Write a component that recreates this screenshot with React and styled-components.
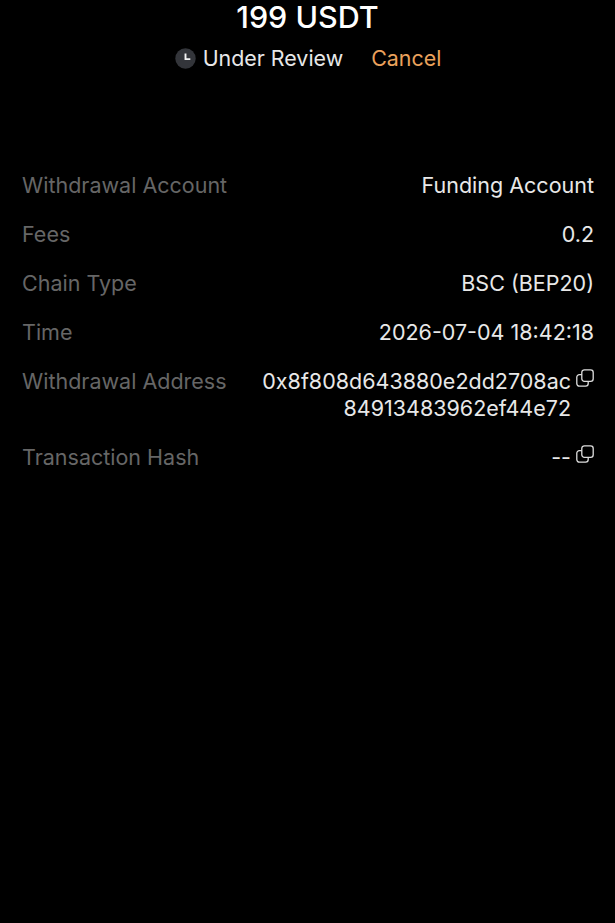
import React from "react";
import styled, { createGlobalStyle } from "styled-components";

const GlobalStyle = createGlobalStyle`
  html, body {
    margin: 0;
    background: #000;
  }
`;

const rows = [
  { label: "Withdrawal Account", value: "Funding Account" },
  { label: "Fees", value: "0.2" },
  { label: "Chain Type", value: "BSC (BEP20)" },
  { label: "Time", value: "2026-07-04 18:42:18" },
  { label: "Withdrawal Address", value: "0x8f808d643880e2dd2708ac 84913483962ef44e72", copy: true },
  { label: "Transaction Hash", value: "--", copy: true },
];

const CopyIcon = () => (
  <CopySvg viewBox="0 0 18 18" fill="none" stroke="#dedede" strokeWidth="1.3">
    <rect x="5.8" y="0.8" width="11.4" height="11.6" rx="2.6" />
    <path d="M5.8 5.6H3.4A2.6 2.6 0 0 0 .8 8.2v6.4a2.6 2.6 0 0 0 2.6 2.6h6.2a2.6 2.6 0 0 0 2.6-2.6v-2.2" />
  </CopySvg>
);

const ClockIcon = () => (
  <svg width="21" height="21" viewBox="0 0 21 21">
    <circle cx="10.5" cy="10.5" r="10.2" fill="#33353a" />
    <path d="M10.5 5.5v5.6h4.8" fill="none" stroke="#f2f2f2" strokeWidth="1.9" />
  </svg>
);

const App = () => (
  <Page>
    <GlobalStyle />
    <Amount>199 USDT</Amount>
    <StatusRow>
      <ClockIcon />
      <StatusText>Under Review</StatusText>
      <CancelLink>Cancel</CancelLink>
    </StatusRow>
    <Details>
      {rows.map((row) => (
        <Row key={row.label}>
          <Label>{row.label}</Label>
          <Value>
            <ValueText>{row.value}</ValueText>
            {row.copy && <CopyIcon />}
          </Value>
        </Row>
      ))}
    </Details>
  </Page>
);

const Page = styled.div`
  width: 615px;
  height: 923px;
  overflow: hidden;
  background: #000;
  font-family: Inter, "Liberation Sans", sans-serif;
`;

const Amount = styled.div`
  color: #fff;
  font-size: 30.5px;
  font-weight: 500;
  line-height: 33px;
  text-align: center;
`;

const StatusRow = styled.div`
  display: flex;
  align-items: center;
  justify-content: center;
  margin-top: 9px;
  height: 32px;
  padding-left: 1px;
  font-size: 21.4px;
`;

const StatusText = styled.span`
  color: #e8e8e8;
  margin-left: 7px;
`;

const CancelLink = styled.span`
  color: #eba25c;
  margin-left: 28px;
`;

const Details = styled.div`
  display: flex;
  flex-direction: column;
  gap: 22px;
  margin-top: 97.5px;
  padding: 0 21px 0 22px;
`;

const Row = styled.div`
  display: flex;
  justify-content: space-between;
  font-size: 21.5px;
  line-height: 27px;
`;

const Label = styled.span`
  color: #666;
  white-space: nowrap;
`;

const Value = styled.div`
  display: flex;
  justify-content: flex-end;
  color: #e8e8e8;
  width: 345px;
`;

const ValueText = styled.span`
  text-align: right;
  word-break: break-word;
`;

const CopySvg = styled.svg`
  flex: none;
  width: 18px;
  height: 18px;
  margin-left: 5px;
  margin-top: 1px;
`;

export default App;
